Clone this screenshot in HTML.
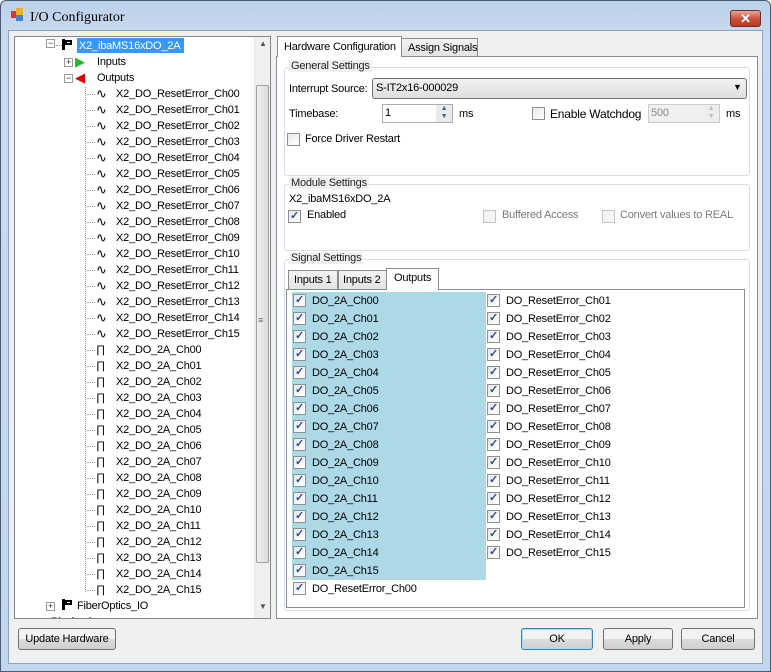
<!DOCTYPE html>
<html><head><meta charset="utf-8"><style>
*{box-sizing:border-box}
body{margin:0;width:771px;height:672px;overflow:hidden;font-family:"Liberation Sans",sans-serif;font-size:11px;letter-spacing:-0.2px;color:#000;background:#fff}
.a{position:absolute;white-space:nowrap}
.win{left:0;top:0;width:771px;height:672px;background:linear-gradient(#bcd1ea,#c9dbef 40px,#c2d6ee);border:1px solid #4a5a70;border-radius:6px 6px 0 0}
.client{left:8px;top:30px;width:755px;height:634px;background:#f0f0f0;border:1px solid #8ea3bd}
.cb{width:13px;height:13px;border:1px solid #8f8f8f;background:linear-gradient(135deg,#e9e9e9,#fff)}
.cb.on::after{content:"✓";position:absolute;left:1px;top:-2px;font-size:11px;color:#2a4a9a;font-weight:bold}
.cb.dis{border-color:#c5c5c5;background:#f4f4f4}
.gb{border:1px solid #d5dfe5;border-radius:3px}
.gl{background:#f0f0f0;padding:0 2px;color:#222}
.btn{border:1px solid #707070;border-radius:3px;background:linear-gradient(#f2f2f2 50%,#dcdcdc 50%,#cfcfcf);text-align:center;line-height:20px}
.ti{height:16px;line-height:16px}
.row{height:18px;line-height:18px}
</style></head><body>
<div class="a win"></div>
<div class="a" style="left:11px;top:11px;width:7px;height:7px;background:#d33"></div>
<div class="a" style="left:16px;top:8px;width:7px;height:7px;background:#f0b020"></div>
<div class="a" style="left:16px;top:15px;width:7px;height:6px;background:#4a7fd0"></div>
<div class="a" style="left:30px;top:10px;font-family:'Liberation Serif',serif;font-size:14px;letter-spacing:0;color:#000">I/O Configurator</div>
<div class="a" style="left:730px;top:10px;width:31px;height:17px;border:1px solid #6d2b22;border-radius:3px;background:linear-gradient(#e9a99b,#c8533e 50%,#b83a24);color:#fff;text-align:center;font-weight:bold;line-height:15px;font-size:13px">✕</div>
<div class="a client"></div>

<!-- tree -->
<div class="a" style="left:14px;top:36px;width:257px;height:583px;background:#fff;border:1px solid #828790;overflow:hidden">
 <div class="a" style="left:31px;top:2px;width:9px;height:9px;border:1px solid #999;font-size:9px;line-height:7px;text-align:center;color:#333">−</div>
 <div class="a" style="left:41px;top:8px;width:6px;border-top:1px dotted #999"></div>
 <div class="a" style="left:47px;top:2px;width:3px;height:11px;background:#000"></div>
 <div class="a" style="left:50px;top:3px;width:7px;height:5px;border:2px solid #000"></div>
 <div class="a" style="left:62px;top:1px;width:107px;height:15px;background:#3399ff"></div>
 <div class="a ti" style="left:64px;top:1px;color:#fff">X2_ibaMS16xDO_2A</div>
 <div class="a" style="left:49px;top:21px;width:9px;height:9px;border:1px solid #999;font-size:9px;line-height:7px;text-align:center;color:#333">+</div>
 <div class="a ti" style="left:60px;top:17px;color:#2b2;font-size:13px">▶</div>
 <div class="a ti" style="left:82px;top:17px">Inputs</div>
 <div class="a" style="left:49px;top:37px;width:9px;height:9px;border:1px solid #999;font-size:9px;line-height:7px;text-align:center;color:#333">−</div>
 <div class="a ti" style="left:60px;top:33px;color:#d00;font-size:13px">◀</div>
 <div class="a ti" style="left:82px;top:33px">Outputs</div>
 <div class="a" style="left:70px;top:50px;height:505px;border-left:1px dotted #999"></div>
 <div id="tr"></div>
 <div class="a" style="left:31px;top:565px;width:9px;height:9px;border:1px solid #999;font-size:9px;line-height:7px;text-align:center;color:#333">+</div>
 <div class="a" style="left:47px;top:562px;width:3px;height:11px;background:#000"></div>
 <div class="a" style="left:50px;top:563px;width:7px;height:5px;border:2px solid #000"></div>
 <div class="a ti" style="left:62px;top:561px">FiberOptics_IO</div>
 <div class="a ti" style="left:36px;top:577px">Playback</div>
 <div class="a" style="left:239px;top:0;width:17px;height:583px;background:#f0f0f0;border-left:1px solid #e6e6e6"></div>
 <div class="a" style="left:244px;top:2px;font-size:8px;color:#555">▲</div>
 <div class="a" style="left:244px;top:565px;font-size:8px;color:#555">▼</div>
 <div class="a" style="left:241px;top:48px;width:13px;height:478px;border:1px solid #a0a0a0;border-radius:2px;background:linear-gradient(90deg,#eee,#ddd)"></div>
 <div class="a" style="left:243px;top:278px;font-size:9px;color:#666">≡</div>
</div>

<!-- tabs -->
<div class="a" style="left:276px;top:56px;width:482px;height:563px;background:#fff;border:1px solid #898c95"></div>
<div class="a" style="left:401px;top:38px;width:77px;height:19px;border:1px solid #898c95;background:linear-gradient(#f3f3f3,#e3e3e3);padding-left:6px;line-height:18px">Assign Signals</div>
<div class="a" style="left:277px;top:36px;width:125px;height:21px;border:1px solid #898c95;border-bottom:none;background:#fff;padding-left:6px;line-height:20px">Hardware Configuration</div>

<div class="a gb" style="left:284px;top:67px;width:466px;height:109px"></div>
<div class="a gl" style="left:289px;top:60px">General Settings</div>
<div class="a" style="left:289px;top:83px">Interrupt Source:</div>
<div class="a" style="left:372px;top:78px;width:375px;height:21px;border:1px solid #707070;border-radius:3px;background:linear-gradient(#f2f2f2,#dedede);padding-left:3px;line-height:19px">S-IT2x16-000029</div>
<div class="a" style="left:733px;top:82px;font-size:9px">▼</div>
<div class="a" style="left:289px;top:108px">Timebase:</div>
<div class="a" style="left:382px;top:104px;width:71px;height:19px;border:1px solid #abadb3;background:#fff;padding-left:2px;line-height:16px">1</div>
<div class="a" style="left:436px;top:105px;width:16px;height:17px;background:#eaeaea;font-size:7px;line-height:8px;color:#468;text-align:center">▲<br>▼</div>
<div class="a" style="left:459px;top:108px">ms</div>
<div class="a cb" style="left:532px;top:107px"></div>
<div class="a" style="left:550px;top:107px;font-size:12px">Enable Watchdog</div>
<div class="a" style="left:648px;top:104px;width:72px;height:19px;border:1px solid #ccc;background:#f0f0f0;padding-left:2px;line-height:16px;color:#888">500</div>
<div class="a" style="left:703px;top:105px;width:16px;height:17px;background:#eee;font-size:7px;line-height:8px;color:#bbb;text-align:center">▲<br>▼</div>
<div class="a" style="left:726px;top:108px">ms</div>
<div class="a cb" style="left:287px;top:133px"></div>
<div class="a" style="left:305px;top:133px">Force Driver Restart</div>

<div class="a gb" style="left:284px;top:184px;width:466px;height:67px"></div>
<div class="a gl" style="left:289px;top:177px">Module Settings</div>
<div class="a" style="left:289px;top:193px">X2_ibaMS16xDO_2A</div>
<div class="a cb on" style="left:288px;top:210px"></div>
<div class="a" style="left:307px;top:209px">Enabled</div>
<div class="a cb dis" style="left:483px;top:210px"></div>
<div class="a" style="left:502px;top:209px;color:#7a7a7a">Buffered Access</div>
<div class="a cb dis" style="left:602px;top:210px"></div>
<div class="a" style="left:620px;top:209px;color:#7a7a7a">Convert values to REAL</div>

<div class="a gb" style="left:284px;top:259px;width:466px;height:352px"></div>
<div class="a gl" style="left:289px;top:252px">Signal Settings</div>
<div class="a" style="left:286px;top:289px;width:459px;height:319px;border:1px solid #898c95;background:#fff"></div>
<div class="a" style="left:288px;top:270px;width:50px;height:20px;border:1px solid #898c95;background:linear-gradient(#f3f3f3,#e3e3e3);padding-left:5px;line-height:19px">Inputs 1</div>
<div class="a" style="left:338px;top:270px;width:49px;height:20px;border:1px solid #898c95;background:linear-gradient(#f3f3f3,#e3e3e3);padding-left:4px;line-height:19px">Inputs 2</div>
<div class="a" style="left:386px;top:268px;width:53px;height:22px;border:1px solid #898c95;border-bottom:none;background:#fff;padding-left:7px;line-height:19px">Outputs</div>
<div class="a" style="left:292px;top:292px;width:194px;height:288px;background:#add8e6"></div>
<div id="sig"></div>

<div class="a btn" style="left:18px;top:628px;width:98px;height:22px">Update Hardware</div>
<div class="a btn" style="left:521px;top:628px;width:72px;height:22px;border-color:#3c7fb1;box-shadow:inset 0 0 0 1px #a8dcf5">OK</div>
<div class="a btn" style="left:603px;top:628px;width:70px;height:22px">Apply</div>
<div class="a btn" style="left:681px;top:628px;width:74px;height:22px">Cancel</div>
<script>
var t='',i,p=n=>(n<10?'0':'')+n;
for(i=0;i<31;i++){var y=49+16*i;var r=i<16;
t+='<div class="a" style="left:72px;top:'+(y+8)+'px;width:8px;border-top:1px dotted #999"></div>';
t+='<div class="a ti" style="left:81px;top:'+y+'px;font-size:'+(r?13:11)+'px">'+(r?'∿':'∏')+'</div>';
t+='<div class="a ti" style="left:101px;top:'+y+'px">'+(r?'X2_DO_ResetError_Ch'+p(i):'X2_DO_2A_Ch'+p(i-16))+'</div>';}
t+='<div class="a ti" style="left:101px;top:545px">X2_DO_2A_Ch15</div><div class="a ti" style="left:81px;top:545px;font-size:11px">∏</div><div class="a" style="left:72px;top:553px;width:8px;border-top:1px dotted #999"></div>';
document.getElementById('tr').innerHTML=t;
var s='';
for(i=0;i<17;i++){var y=292+18*i;
s+='<div class="a cb on" style="left:293px;top:'+(y+2)+'px"></div><div class="a row" style="left:312px;top:'+y+'px">'+(i<16?'DO_2A_Ch'+p(i):'DO_ResetError_Ch00')+'</div>';
if(i<15)s+='<div class="a cb on" style="left:487px;top:'+(y+2)+'px"></div><div class="a row" style="left:506px;top:'+y+'px">DO_ResetError_Ch'+p(i+1)+'</div>';}
document.getElementById('sig').innerHTML=s;
</script>
</body></html>
